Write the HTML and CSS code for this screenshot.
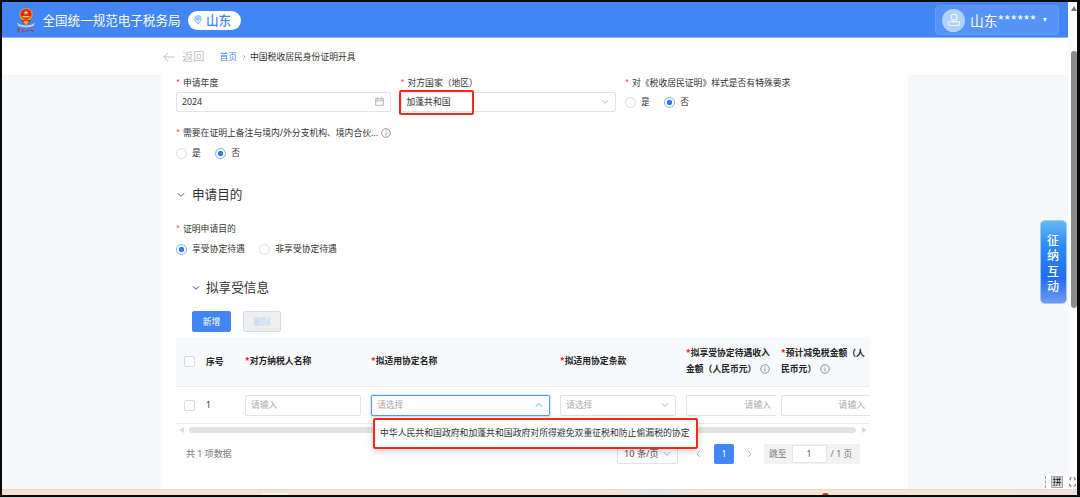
FILE: index.html
```html
<!DOCTYPE html>
<html lang="zh-CN">
<head>
<meta charset="utf-8">
<title>中国税收居民身份证明开具</title>
<link rel="stylesheet" href="styles.css">
</head>
<body>
<div class="window">
  <div class="main">
    <header class="topbar">
      <svg class="emblem" viewBox="0 0 20 27">
        <path d="M1 15.5 Q4 18.5 10 18.5 Q16 18.5 19 15.5 L17.5 19 Q10 21.5 2.5 19Z" fill="#c9d3e2"/>
        <path d="M4 11 L7 17 H13 L16 11Z" fill="#56627c"/>
        <circle cx="10" cy="7.5" r="6.6" fill="#e8a33c"/>
        <circle cx="10" cy="7.2" r="5.5" fill="#e3231b"/>
        <path d="M10 3 L10.8 5 H12.8 L11.2 6.2 L11.8 8 L10 7 L8.2 8 L8.8 6.2 L7.2 5 H9.2Z M6.5 9 H13.5 V10.4 H6.5Z" fill="#fbc934"/>
        <path d="M6 13 H14 L12 17 H8Z" fill="#d92c20"/>
        <path d="M7 15 L10 13.5 L13 15 L10 18Z" fill="#efb43d"/>
        <path d="M1 22.5 H4 M2.5 21 V26 M5.5 23.5 L8 22.5 M6 24.5 H9 M10 23 L12 24.5 M12.5 22.7 L11 25 M14 23.5 H18 M15 22.4 L17 25" stroke="#c92b3f" stroke-width="1" fill="none"/>
      </svg>
      <span class="brand">全国统一规范电子税务局</span>
      <span class="region">
        <svg class="pin" viewBox="0 0 8 10"><path d="M4 9.2 C2 7 .8 5.6 .8 3.9 A3.2 3.2 0 0 1 7.2 3.9 C7.2 5.6 6 7 4 9.2Z" fill="#d4e4ff" stroke="#6ba0f6" stroke-width=".8"/><circle cx="4" cy="3.9" r="1.2" fill="none" stroke="#6ba0f6" stroke-width=".8"/></svg>
        山东
      </span>
      <div class="user">
        <span class="avatar"><svg viewBox="0 0 14 14"><circle cx="7" cy="4.2" r="3" /><rect x="1.3" y="8.6" width="11.4" height="3.9" rx="1.9"/></svg></span>
        <span>山东******</span>
        <i class="caret"></i>
      </div>
    </header>

    <nav class="crumbs">
      <svg class="back-arrow" viewBox="0 0 12 10"><path d="M5 .8 L.8 5 L5 9.2 M.8 5 H11.5"/></svg>
      <span class="back">返回</span>
      <a class="home">首页</a>
      <svg class="sep" viewBox="0 0 4 6"><path d="M1 1 L3 3 L1 5"/></svg>
      <span>中国税收居民身份证明开具</span>
    </nav>

    <div class="page">
      <section class="sheet">
        <div class="form-row first">
          <div class="field">
            <label class="label"><b>*</b>申请年度</label>
            <div class="input"><span>2024</span>
              <svg class="calendar" viewBox="0 0 9 9"><path d="M.7 1.7 H8.3 V8.3 H.7Z M.7 3.8 H8.3 M2.6 .4 V2.6 M6.4 .4 V2.6"/></svg>
            </div>
          </div>
          <div class="field">
            <label class="label"><b>*</b>对方国家（地区）</label>
            <div class="input marked"><span>加蓬共和国</span><svg class="chev" viewBox="0 0 8 6"><path d="M1 1.3 L4 4.4 L7 1.3"/></svg></div>
          </div>
          <div class="field">
            <label class="label"><b>*</b>对《税收居民证明》样式是否有特殊要求</label>
            <div class="radios"><i class="radio"></i><span>是</span><i class="radio on"></i><span>否</span></div>
          </div>
        </div>
        <div class="field second">
          <label class="label"><b>*</b>需要在证明上备注与境内/外分支机构、境内合伙...<svg class="info" viewBox="0 0 10 10"><circle cx="5" cy="5" r="4.3"/><path d="M5 4.4 V7.5 M5 2.4 V3.4"/></svg></label>
          <div class="radios"><i class="radio"></i><span>是</span><i class="radio on"></i><span>否</span></div>
        </div>

        <h2 class="heading"><svg class="chev dark" viewBox="0 0 8 6"><path d="M1 1.3 L4 4.4 L7 1.3"/></svg>申请目的</h2>
        <div class="field third">
          <label class="label"><b>*</b>证明申请目的</label>
          <div class="radios"><i class="radio on"></i><span>享受协定待遇</span><i class="radio"></i><span>非享受协定待遇</span></div>
        </div>

        <h3 class="heading sub"><svg class="chev dark" viewBox="0 0 8 6"><path d="M1 1.3 L4 4.4 L7 1.3"/></svg>拟享受信息</h3>
        <div class="actions"><button class="btn primary">新增</button><button class="btn disabled">删除</button></div>

        <div class="table">
          <div class="row head">
            <div class="cell"><i class="check"></i></div>
            <div class="cell">序号</div>
            <div class="cell"><p><b>*</b>对方纳税人名称</p></div>
            <div class="cell"><p><b>*</b>拟适用协定名称</p></div>
            <div class="cell"><p><b>*</b>拟适用协定条款</p></div>
            <div class="cell"><p><b>*</b>拟享受协定待遇收入<br>金额（人民币元）<svg class="info" viewBox="0 0 10 10"><circle cx="5" cy="5" r="4.3"/><path d="M5 4.4 V7.5 M5 2.4 V3.4"/></svg></p></div>
            <div class="cell"><p><b>*</b>预计减免税金额（人<br>民币元）<svg class="info" viewBox="0 0 10 10"><circle cx="5" cy="5" r="4.3"/><path d="M5 4.4 V7.5 M5 2.4 V3.4"/></svg></p></div>
          </div>
          <div class="row">
            <div class="cell"><i class="check"></i></div>
            <div class="cell">1</div>
            <div class="cell wide"><div class="input hint">请输入</div></div>
            <div class="cell wide"><div class="input hint active">请选择<svg class="chev blue" viewBox="0 0 8 6"><path d="M1 4.6 L4 1.5 L7 4.6"/></svg>
              <div class="dropdown">中华人民共和国政府和加蓬共和国政府对所得避免双重征税和防止偷漏税的协定</div></div></div>
            <div class="cell wide"><div class="input hint">请选择<svg class="chev" viewBox="0 0 8 6"><path d="M1 1.3 L4 4.4 L7 1.3"/></svg></div></div>
            <div class="cell cut"><div class="input hint open">请输入</div></div>
            <div class="cell"><div class="input hint open">请输入</div></div>
          </div>
        </div>
        <div class="hscroll"><i class="left"></i><i class="bar"></i><i class="right"></i></div>

        <div class="pager">
          <span class="total">共 1 项数据</span>
          <div class="size">10 条/页<svg class="chev" viewBox="0 0 8 6"><path d="M1 1.3 L4 4.4 L7 1.3"/></svg></div>
          <svg class="step" viewBox="0 0 5 8"><path d="M4 1 L1 4 L4 7"/></svg>
          <span class="current">1</span>
          <svg class="step" viewBox="0 0 5 8"><path d="M1 1 L4 4 L1 7"/></svg>
          <div class="jump"><span>跳至</span><span class="num">1</span><span>/ 1 页</span></div>
        </div>
      </section>
    </div>
  </div>
  <aside class="vscroll"><i class="up"></i><i class="thumb"></i></aside>
  <footer class="taskbar"><i class="tab"></i><i class="dot"></i></footer>
  <div class="float-btn">征纳互动</div>
  <div class="ime"><i class="grip"></i><span>拼</span><svg viewBox="0 0 7 12"><path d="M2.5 1.5 Q.8 1.5 .8 3 Q.8 4 2 4 M4.5 1.5 Q6.3 1.5 6.3 3 Q6.3 4 5 4 M.8 8 V10 H2.6 M6.3 8 V10 H4.5"/></svg></div>
</div>
</body>
</html>
```
FILE: styles.css
```css
*, *::before { box-sizing: border-box; }
body {
  margin: 0;
  background: #c8c8c8;
  font-family: "Noto Sans", "Noto Sans CJK SC", sans-serif;
  font-size: 8.8px;
  line-height: 12px;
  color: #333;
}
i { font-style: normal; }
svg { flex: none; fill: none; stroke: #aaa; stroke-width: .9; }
.window {
  position: relative;
  width: 1080px;
  height: 497px;
  border: solid #090909;
  border-width: 2px 3px 2px 2px;
  display: grid;
  grid-template: 487px 6px / 1066px 9px;
  overflow: hidden;
  background: #fff;
}
.main { display: flex; flex-direction: column; overflow: hidden; }

.topbar {
  height: 36px;
  flex: none;
  display: flex;
  align-items: center;
  padding: 0 9px 0 14px;
  background: #4286f6;
  border-bottom: 1px solid #8ab5fa;
  color: #fff;
  font-family: "Noto Sans CJK SC", sans-serif;
}
.emblem { width: 20px; height: 27px; stroke: none; margin-top: 2px; }
.brand { margin: 1px 0 0 6.5px; font-size: 12.55px; line-height: 18px; }
.region {
  display: flex;
  align-items: center;
  width: 53px;
  height: 19px;
  margin: 1px 0 0 7.5px;
  padding: 0 0 1px 6px;
  border-radius: 10px;
  background: #fff;
  color: #4286f6;
  font-size: 12.6px;
  font-weight: 500;
}
.pin { width: 8px; height: 10px; margin-right: 4px; }
.user {
  display: flex;
  align-items: center;
  width: 124px;
  height: 30px;
  margin: 1px 0 0 auto;
  padding-left: 6px;
  border: 1px solid #659df8;
  border-radius: 4px;
  background: #5593f7;
  font-size: 13.8px;
  line-height: 20px;
}
.avatar {
  display: flex;
  align-items: center;
  justify-content: center;
  width: 23px;
  height: 23px;
  margin-right: 5px;
  border-radius: 50%;
  background: #b3d0fb;
}
.avatar svg { width: 14px; height: 14px; stroke: #f1f7ff; stroke-width: 1.1; }
.caret { margin-left: 7px; border: solid transparent; border-width: 4px 2.5px 0; border-top-color: #fff; }

.crumbs {
  height: 37px;
  flex: none;
  display: flex;
  align-items: center;
  padding-left: 161px;
  background: #fff;
}
.back-arrow { width: 12px; height: 10px; stroke: #bdbdbd; }
.back { margin: 0 15px 0 7px; font-size: 11.2px; color: #c3c3c3; }
.home { color: #4286f6; }
.sep { width: 4px; height: 6px; margin: 0 4px 0 5px; }

.page { flex: 1; background: #f6f7fa; padding-left: 159px; }
.sheet { width: 747px; height: 100%; padding-left: 15px; background: #fff; }
.form-row { display: grid; grid-template-columns: 215px 215px 240px; column-gap: 9.5px; }
.first { height: 50px; }
.label { display: flex; align-items: center; height: 15px; white-space: nowrap; }
.label b { width: 7px; color: #f25555; font-family: "Noto Sans CJK SC", sans-serif; font-weight: 400; }
.info { width: 10px; height: 10px; margin-left: 3px; stroke: #777; stroke-width: .8; }
.input {
  position: relative;
  display: flex;
  align-items: center;
  justify-content: space-between;
  height: 21px;
  padding: 0 6px 1px 5px;
  border: 1px solid #e3e3e3;
  border-radius: 2px;
  background: #fff;
}
.first .input { margin-top: 2px; height: 20px; }
.calendar { width: 9px; height: 9px; }
.chev { width: 8px; height: 6px; }
.chev.dark { stroke: #444; }
.chev.blue { stroke: #4286f6; }
.marked::before {
  content: "";
  position: absolute;
  left: -3px;
  top: -3px;
  width: 75px;
  height: 25px;
  border: 2px solid #f6281e;
  border-radius: 2px;
}
.radios { display: flex; align-items: center; height: 20px; margin-top: 2px; }
.radios span { margin: 0 14.5px 0 5px; }
.radio {
  width: 11px;
  height: 11px;
  border: 1px solid #dedede;
  border-radius: 50%;
  background: #fff;
}
.radio.on { border-color: #80aef9; background: radial-gradient(circle, #3479f4 0 2.4px, #fff 3.1px); }
.second .radios, .third .radios { margin-top: 3px; }
.second { height: 57px; }
.heading {
  display: flex;
  align-items: center;
  height: 25px;
  margin: 0 0 14px;
  padding-left: 1px;
  font-size: 12.6px;
  font-weight: 400;
}
.heading .chev { margin-right: 7px; }
.third { height: 55px; }
.sub { height: 24px; margin-bottom: 11px; padding-left: 16px; }
.sub .chev { margin-right: 6px; }
.actions { display: flex; gap: 12px; padding-left: 16px; height: 26px; }
.btn {
  width: 39px;
  height: 21px;
  padding: 0;
  border: 1px solid #4286f6;
  border-radius: 2px;
  background: #4286f6;
  color: #fff;
  font: inherit;
}
.disabled { width: 38px; border-color: #c8dcf9; background: #eee; color: #b5d2fb; }

.table { width: 694px; }
.row {
  display: grid;
  grid-template-columns: 30px 39px 126px 189px 126px 95px 89px;
  height: 37px;
  border-bottom: 1px solid #e9ebee;
}
.head {
  height: 50px;
  background: #f8f9fc;
  font-family: "Noto Sans CJK SC", sans-serif;
  font-weight: 700;
  color: #222;
  line-height: 16px;
}
.cell { display: flex; align-items: center; white-space: nowrap; }
.cell:first-child { padding-left: 8px; }
.cell p { margin: -2px 0 0; }
.cell b { color: #f5222d; }
.cell .info { vertical-align: -2px; margin-left: 4px; }
.cell .input { width: 100%; }
.wide { padding-right: 10px; }
.cut { padding-right: 5px; }
.check { width: 11px; height: 11px; border: 1px solid #dcdcdc; border-radius: 2px; background: #fff; }
.hint { color: #aaa; }
.open { justify-content: flex-end; border-right: 0; border-radius: 2px 0 0 2px; padding-right: 5px; }
.active { border-color: #5b97f8; box-shadow: 0 0 1px 1px #d5e4fd; }
.dropdown {
  position: absolute;
  z-index: 2;
  left: 1px;
  top: 22px;
  width: 325px;
  height: 31px;
  padding: 0 0 0 5px;
  border: 2px solid #f6281e;
  border-radius: 2px;
  background: #fff;
  box-shadow: 0 2px 7px rgba(0, 0, 0, .2);
  color: #333;
  font-size: 8.85px;
  line-height: 26px;
  white-space: nowrap;
}
.hscroll { display: flex; align-items: center; height: 11px; width: 694px; padding: 0 3px; }
.left, .right { border: solid transparent; border-width: 3.5px 0; }
.left { border-right: 5px solid #d9d9d9; }
.right { border-left: 5px solid #d9d9d9; }
.bar { flex: 1; height: 6px; margin: 0 6px 0 5px; border-radius: 3px; background: #e2e2e2; }

.pager { display: flex; align-items: center; width: 684px; height: 21px; margin-top: 8px; padding-left: 10px; color: #555; }
.total { flex: 1; color: #777; font-size: 9px; }
.size {
  display: flex;
  align-items: center;
  justify-content: space-between;
  width: 61px;
  height: 21px;
  margin-right: 18px;
  padding: 0 6px;
  border: 1px solid #e3e3e3;
  border-radius: 2px;
  font-size: 9.2px;
}
.step { width: 5px; height: 8px; }
.current {
  width: 20px;
  height: 20px;
  margin: 0 13px;
  border-radius: 2px;
  background: #4286f6;
  color: #fff;
  line-height: 20px;
  text-align: center;
}
.jump {
  display: flex;
  align-items: center;
  width: 96px;
  height: 20px;
  margin-left: 12px;
  padding-left: 5px;
  background: #f2f2f2;
  color: #777;
}
.num { width: 35px; height: 18px; margin: 0 4px 0 5px; border: 1px solid #e5e5e5; background: #fff; line-height: 16px; text-align: center; color: #555; }

.vscroll { background: #fbfbfb; display: flex; flex-direction: column; align-items: center; padding: 4px 0 0 2px; }
.up { border: solid transparent; border-width: 0 3.5px 5px; border-bottom-color: #777; }
.thumb { width: 6px; height: 257px; margin-top: 40px; border-radius: 3px; background: #8b8b8b; }
.taskbar {
  grid-column: 1 / 3;
  display: flex;
  border-top: 1px solid #dedbd6;
  background: linear-gradient(90deg, #f8e2cd 0 54%, #f6e3d2 57%, #e2e4f0 61%, #f5e5cf 65% 93%, #f3dfe0);
}
.tab { width: 26px; height: 2px; margin: 3px 0 0 260px; background: #f6f0ea; }
.dot { width: 7px; height: 3px; margin: 3px 0 0 534px; border-radius: 4px 4px 0 0; background: #b93b2c; }
.float-btn {
  position: absolute;
  left: 1038px;
  top: 218px;
  width: 27px;
  height: 84px;
  padding: 12px 6px;
  border: 1px solid #9ccbf7;
  border-radius: 5px;
  background: linear-gradient(#64b9f3, #2d8bf2 30%, #216df0 70%, #709cf2);
  color: #fff;
  font-size: 12px;
  font-weight: 500;
  line-height: 15.3px;
}
.ime {
  position: absolute;
  right: 0;
  bottom: 6px;
  display: flex;
  align-items: center;
  width: 32px;
  height: 15px;
  background: #fff;
}
.grip { height: 12px; border-left: 1px dashed #aaa; }
.ime span { width: 12px; height: 12px; margin: 0 6px 0 5px; border: 1px solid #aaa; background: #ddd; color: #111; font-size: 9px; line-height: 10px; text-align: center; }
.ime svg { width: 7px; height: 12px; stroke: #555; }
```
